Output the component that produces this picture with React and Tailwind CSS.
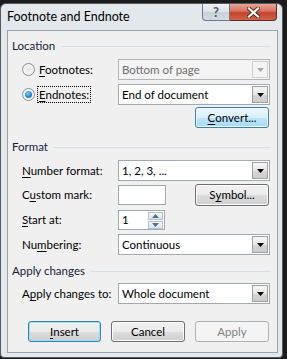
import React from 'react';

const btnBase = 'h-[21px] rounded-[3px] border flex items-center justify-center text-[11.5px] leading-none';
const btnNormal = 'border-[#707070] bg-[linear-gradient(#f2f2f2_0%,#ebebeb_50%,#dddddd_50%,#cfcfcf_100%)] shadow-[inset_0_0_0_1px_#fbfbfb] text-black';
const btnHot = 'border-[#3c7fb1] bg-[linear-gradient(#eaf6fd_0%,#d9f0fc_50%,#bee6fd_50%,#a7d9f5_100%)] shadow-[inset_0_0_0_1px_#f4fbfe] text-black';
const btnDefault = 'border-[#3c7fb1] bg-[linear-gradient(#f2f2f2_0%,#ebebeb_50%,#dddddd_50%,#cfcfcf_100%)] shadow-[inset_0_0_0_1px_#8fe2fb] text-black';
const btnDisabled = 'border-[#adb2b5] bg-[#f4f4f4] text-[#838383]';

const Arrow = ({ disabled }) => (
    <div className={`ml-auto mr-[1px] w-[16px] h-[17px] flex items-center justify-center border ${disabled ? 'border-[#d0d0d0] bg-[#f4f4f4]' : 'border-[#a0a0a0] bg-[linear-gradient(#f6f6f6_0%,#e8e8e8_50%,#d6d6d6_51%,#cccccc_100%)]'}`}>
        <svg width="7" height="4" viewBox="0 0 7 4">
            <path d="M0 0H7L3.5 4Z" fill={disabled ? '#a8a8a8' : '#000'} />
        </svg>
    </div>
);

const Combo = ({ value, disabled }) => (
    <div className={`w-[152px] h-[21px] border flex items-center ${disabled ? 'border-[#b5b5b5] bg-[#f4f4f4] text-[#6d6d6d]' : 'border-[#a3a9b1] bg-white text-black'}`}>
        <span className="pl-[3px] text-[11.5px] leading-none">{value}</span>
        <Arrow disabled={disabled} />
    </div>
);

const Radio = ({ checked }) => (
    <div className="w-[13px] h-[13px] rounded-full border border-[#8e8f8f] bg-[radial-gradient(circle_at_50%_50%,#e6e6e6_0%,#f4f4f4_60%,#dcdcdc_100%)] flex items-center justify-center">
        {checked && <div className="w-[7px] h-[7px] rounded-full bg-[radial-gradient(circle_at_40%_35%,#7fd3ff_0%,#2b8ad8_50%,#1a5a9c_100%)]" />}
    </div>
);

const Header = ({ children }) => (
    <div className="h-[16px] flex items-center pl-[4px] pr-[6px]">
        <span className="text-[11.5px] leading-none text-[#151a3c] whitespace-nowrap">{children}</span>
        <div className="flex-1 h-px bg-[#d5dfe5] ml-[6px]" />
    </div>
);

const Label = ({ children }) => (
    <div className="w-[96px] text-[11.5px] leading-none text-black whitespace-nowrap">{children}</div>
);

const U = ({ children }) => <span className="underline underline-offset-[2px]">{children}</span>;

export default function App() {
    return (
        <div className="w-[287px] h-[359px] bg-[#1c1c1c] overflow-hidden font-['Lato',sans-serif]">
            <div className="mt-[3px] w-[283px] h-[355px] rounded-t-[6px] rounded-b-[4px] border border-[#555a60] bg-[#e2e8ec] flex flex-col">
                {/* title bar */}
                <div className="h-[26px] flex items-start justify-between">
                    <div className="pl-[6px] pt-[5px] text-[12.5px] leading-[16px] text-black">Footnote and Endnote</div>
                    <div className="flex mr-[5px]">
                        <div className="w-[28px] h-[17px] rounded-bl-[4px] border border-t-0 border-[#6e7a86] bg-[linear-gradient(#eef1f4_0%,#dde3e9_50%,#c9d1d9_51%,#d3dae1_100%)] flex items-center justify-center">
                            <span className="text-[13px] font-bold leading-none text-[#4f5b68]">?</span>
                        </div>
                        <div className="w-[47px] h-[17px] rounded-br-[4px] border border-l-0 border-t-0 border-[#5e2a25] bg-[linear-gradient(#e7a898_0%,#d7715c_45%,#c5442d_55%,#d0634b_100%)] flex items-center justify-center">
                            <svg width="13" height="11" viewBox="0 0 13 11">
                                <path d="M2 1.5L11 9.5M11 1.5L2 9.5" stroke="#5b2520" strokeWidth="4" strokeLinecap="square" />
                                <path d="M2 1.5L11 9.5M11 1.5L2 9.5" stroke="#fff" strokeWidth="2.2" strokeLinecap="square" />
                            </svg>
                        </div>
                    </div>
                </div>

                {/* client area */}
                <div className="ml-[6px] w-[271px] h-[323px] border border-[#9aa3ac] bg-[#f0f0f0] flex flex-col">
                    <div className="mt-[7px]">
                        <Header>Location</Header>
                    </div>

                    <div className="mt-[5px] h-[21px] flex items-center">
                        <div className="pl-[14px] w-[110px] flex items-center">
                            <Radio />
                            <span className="ml-[4px] text-[11.5px] leading-none"><U>F</U>ootnotes:</span>
                        </div>
                        <Combo value="Bottom of page" disabled />
                    </div>

                    <div className="mt-[4px] h-[21px] flex items-center">
                        <div className="pl-[14px] w-[110px] flex items-center">
                            <Radio checked />
                            <span className="ml-[2px] px-[1px] py-[2px] border border-dotted border-black text-[11.5px] leading-none"><U>E</U>ndnotes:</span>
                        </div>
                        <Combo value="End of document" />
                    </div>

                    <div className="mt-[2px] pl-[187px]">
                        <div className={`${btnBase} ${btnHot} w-[74px]`}><U>C</U>onvert...</div>
                    </div>

                    <div className="mt-[11px]">
                        <Header>Format</Header>
                    </div>

                    <div className="mt-[5px] h-[21px] flex items-center pl-[14px]">
                        <Label><U>N</U>umber format:</Label>
                        <Combo value="1, 2, 3, ..." />
                    </div>

                    <div className="mt-[3px] h-[22px] flex items-center pl-[14px]">
                        <Label>C<U>u</U>stom mark:</Label>
                        <div className="w-[48px] h-[20px] border border-[#a3a9b1] bg-white" />
                        <div className={`${btnBase} ${btnNormal} ml-[29px] w-[74px] h-[22px]`}>S<U>y</U>mbol...</div>
                    </div>

                    <div className="mt-[4px] h-[20px] flex items-center pl-[14px]">
                        <Label><U>S</U>tart at:</Label>
                        <div className="w-[47px] h-[20px] border border-[#a3a9b1] bg-white flex items-center">
                            <span className="pl-[3px] text-[11.5px] leading-none">1</span>
                            <div className="ml-auto mr-[1px] w-[15px] flex flex-col gap-px">
                                <div className="h-[8px] border border-[#b6c3cf] bg-[linear-gradient(#f5f8fa,#dbe3ea)] flex items-center justify-center">
                                    <svg width="7" height="4" viewBox="0 0 7 4"><path d="M0 4H7L3.5 0Z" fill="#4d6f95" /></svg>
                                </div>
                                <div className="h-[8px] border border-[#b6c3cf] bg-[linear-gradient(#f5f8fa,#dbe3ea)] flex items-center justify-center">
                                    <svg width="7" height="4" viewBox="0 0 7 4"><path d="M0 0H7L3.5 4Z" fill="#4d6f95" /></svg>
                                </div>
                            </div>
                        </div>
                    </div>

                    <div className="mt-[4px] h-[21px] flex items-center pl-[14px]">
                        <Label>Nu<U>m</U>bering:</Label>
                        <Combo value="Continuous" />
                    </div>

                    <div className="mt-[8px]">
                        <Header>Apply changes</Header>
                    </div>

                    <div className="mt-[4px] h-[21px] flex items-center pl-[14px]">
                        <Label>A<U>p</U>ply changes to:</Label>
                        <Combo value="Whole document" />
                    </div>

                    <div className="mt-[17px] flex pl-[20px] gap-[10px]">
                        <div className={`${btnBase} ${btnDefault} w-[73px]`}><U>I</U>nsert</div>
                        <div className={`${btnBase} ${btnNormal} w-[74px]`}>Cancel</div>
                        <div className={`${btnBase} ${btnDisabled} w-[74px]`}>Apply</div>
                    </div>
                </div>
            </div>
        </div>
    );
}
